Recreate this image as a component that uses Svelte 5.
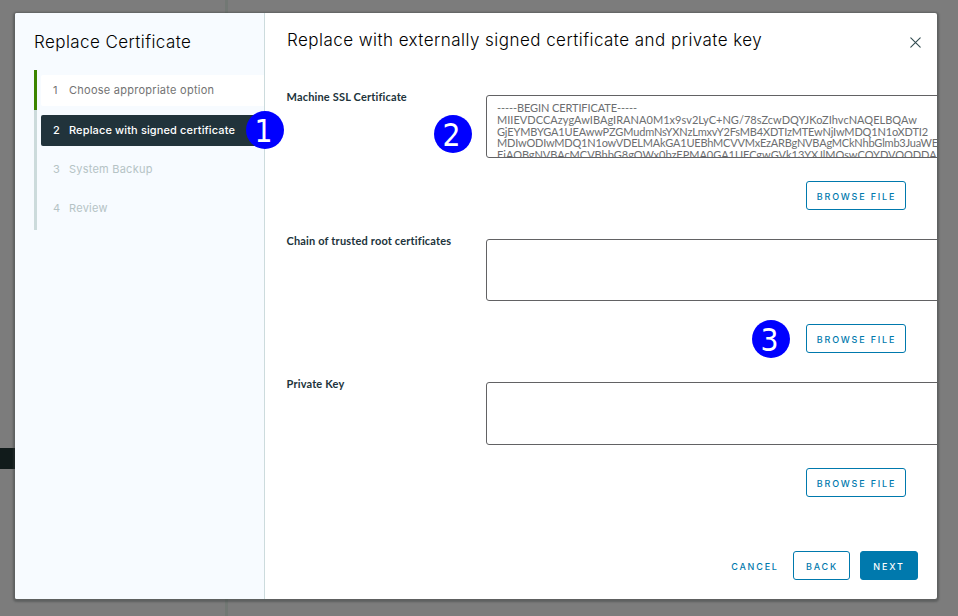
<script>
  const steps = [
    { label: 'Choose appropriate option', state: 'done', ls: 0.26 },
    { label: 'Replace with signed certificate', state: 'current', ls: 0.13 },
    { label: 'System Backup', state: 'todo', ls: 0.23 },
    { label: 'Review', state: 'todo', ls: 0.27 }
  ];
  const certificate = [
    { text: '-----BEGIN CERTIFICATE-----', ls: -0.1 },
    { text: 'MIIEVDCCAzygAwIBAgIRANA0M1x9sv2LyC+NG/78sZcwDQYJKoZIhvcNAQELBQAw', ls: 0.03 },
    { text: 'GjEYMBYGA1UEAwwPZGMudmNsYXNzLmxvY2FsMB4XDTIzMTEwNjIwMDQ1N1oXDTI2', ls: -0.15 },
    { text: 'MDIwODIwMDQ1N1owVDELMAkGA1UEBhMCVVMxEzARBgNVBAgMCkNhbGlmb3JuaWE', ls: -0.2 },
    { text: 'EjAQBgNVBAcMCVBhbG8gQWx0bzEPMA0GA1UECgwGVk13YXJlMQswCQYDVQQDDA', ls: -0.02 }
  ];
  const fields = [
    { label: 'Machine SSL Certificate', lines: certificate },
    { label: 'Chain of trusted root certificates', lines: [] },
    { label: 'Private Key', lines: [] }
  ];
</script>

<div class="screen">
  <div class="backdrop"><i class="divider"></i><i class="strip"></i></div>
  <div class="modal">
    <aside>
      <h1>Replace Certificate</h1>
      <ol>
        {#each steps as step, i}
          <li class={step.state}>
            <div class="step">
              <span class="num">{i + 1}</span>
              <span style="letter-spacing:{step.ls}px">{step.label}</span>
            </div>
          </li>
        {/each}
      </ol>
    </aside>
    <main>
      <header>
        <h2>Replace with externally signed certificate and private key</h2>
        <svg class="close" width="11" height="11" viewBox="0 0 11 11" aria-hidden="true">
          <path d="M0.8 0.8L10.2 10.2M10.2 0.8L0.8 10.2" />
        </svg>
      </header>
      <div class="form">
        {#each fields as field}
          <section>
            <div class="label">{field.label}</div>
            <div class="control">
              <div class="area">
                {#each field.lines as line}
                  <div class="line" style="letter-spacing:{line.ls}px">{line.text}</div>
                {/each}
              </div>
              <button class="outline browse">BROWSE FILE</button>
            </div>
          </section>
        {/each}
      </div>
      <footer>
        <button class="link">CANCEL</button>
        <button class="outline back">BACK</button>
        <button class="primary">NEXT</button>
      </footer>
    </main>
  </div>
  <span class="mark one">1</span>
  <span class="mark two">2</span>
  <span class="mark three">3</span>
</div>

<style>
  .screen {
    position: relative;
    box-sizing: border-box;
    width: 958px;
    height: 616px;
    padding: 13px 21px 17px 15px;
    overflow: hidden;
    background: #7c7c7c;
    font-family: Inter, 'Open Sans', sans-serif;
    font-feature-settings: 'calt' 0;
  }
  .backdrop { position: absolute; inset: 0; }
  .divider { position: absolute; left: 225px; top: 0; width: 3px; height: 616px; background: #727874; }
  .strip { position: absolute; left: 0; top: 448px; width: 15px; height: 21px; background: #111b1b; }
  .modal {
    position: relative;
    display: flex;
    height: 586px;
    border-radius: 2px;
    overflow: hidden;
    background: #fff;
    box-shadow: 0 1px 2px 2px rgba(50, 55, 55, 0.4);
  }
  aside {
    box-sizing: border-box;
    flex: 0 0 250px;
    padding: 18px 0 0 19px;
    background: #f7fbff;
    border-right: 1px solid #ccdbdd;
  }
  h1, h2 {
    margin: 0;
    font-size: 17px;
    font-weight: 300;
    line-height: 22px;
    color: #000;
    white-space: nowrap;
  }
  h1 { letter-spacing: 0.42px; }
  h2 { letter-spacing: 0.455px; }
  ol { margin: 17px 0 0; padding: 0; list-style: none; }
  li {
    box-sizing: border-box;
    height: 39px;
    padding: 3px 0 5px 4px;
    border-left: 3px solid #ccdbdc;
  }
  li.done { height: 40px; padding-top: 5px; border-color: #3c8500; }
  li.current { height: 41px; padding-top: 5px; }
  li:last-child { height: 40px; }
  .step {
    box-sizing: border-box;
    display: flex;
    align-items: center;
    height: 31px;
    padding-bottom: 2px;
    font-size: 11px;
    color: #b5c3c5;
    white-space: nowrap;
    border-radius: 2px 0 0 2px;
  }
  .todo .step { padding-bottom: 1px; }
  .num { width: 16px; padding-left: 12px; }
  .done .step { background: #fff; color: #737373; }
  .current .step { background: #21333b; color: #fff; font-weight: 500; }
  main { flex: 1; min-width: 0; display: flex; flex-direction: column; }
  header { display: flex; justify-content: space-between; height: 82px; padding: 0 16px 0 22px; box-sizing: border-box; }
  h2 { margin-top: 16px; }
  .close { margin-top: 24px; }
  .close path { fill: none; stroke: #314b50; stroke-width: 1.1; stroke-linecap: round; }
  section { display: flex; height: 144px; padding-left: 21.5px; }
  section:nth-child(2) { height: 143px; }
  section:nth-child(2) .area { height: 62px; }
  .label {
    flex: 0 0 199.5px;
    margin-top: -5px;
    font: 700 11px/14px Lato, sans-serif;
    letter-spacing: 0.17px;
    color: #21333b;
    white-space: nowrap;
  }
  .control { flex: 1; min-width: 0; display: flex; flex-direction: column; overflow: hidden; }
  .area {
    box-sizing: border-box;
    width: 480px;
    height: 63px;
    flex: none;
    padding: 6.4px 10px 0;
    overflow: hidden;
    border: 1px solid #626264;
    border-radius: 3px;
  }
  .line { height: 11.7px; font: 400 11px/11.7px Lato, sans-serif; color: #6c6e70; white-space: nowrap; }
  button {
    box-sizing: border-box;
    height: 29px;
    margin: 0;
    padding: 3px 0 0 1px;
    border: 1px solid #0079ad;
    border-radius: 3px;
    background: #fff;
    color: #0079ad;
    font: 500 9px/12px Inter, sans-serif;
    letter-spacing: 1.8px;
    text-align: center;
  }
  .browse { width: 100px; flex: none; margin: 23px 0 0 320px; }
  footer { display: flex; justify-content: flex-end; height: 29px; margin: auto 19px 19px 0; }
  .link { width: 63px; border-color: transparent; }
  .back { width: 57px; margin: 0 10px 0 7px; }
  .primary { width: 58px; padding-left: 0; background: #0079ad; color: #fff; }
  .mark {
    position: absolute;
    width: 38px;
    height: 38px;
    border-radius: 50%;
    background: #00f;
    color: #fff;
    font: 31.5px/40px 'DejaVu Sans Condensed', 'DejaVu Sans', sans-serif;
    font-stretch: condensed;
    text-align: center;
    text-indent: -3px;
  }
  .one { left: 246px; top: 111px; }
  .two { left: 434px; top: 115px; }
  .three { left: 752px; top: 320px; }
</style>
